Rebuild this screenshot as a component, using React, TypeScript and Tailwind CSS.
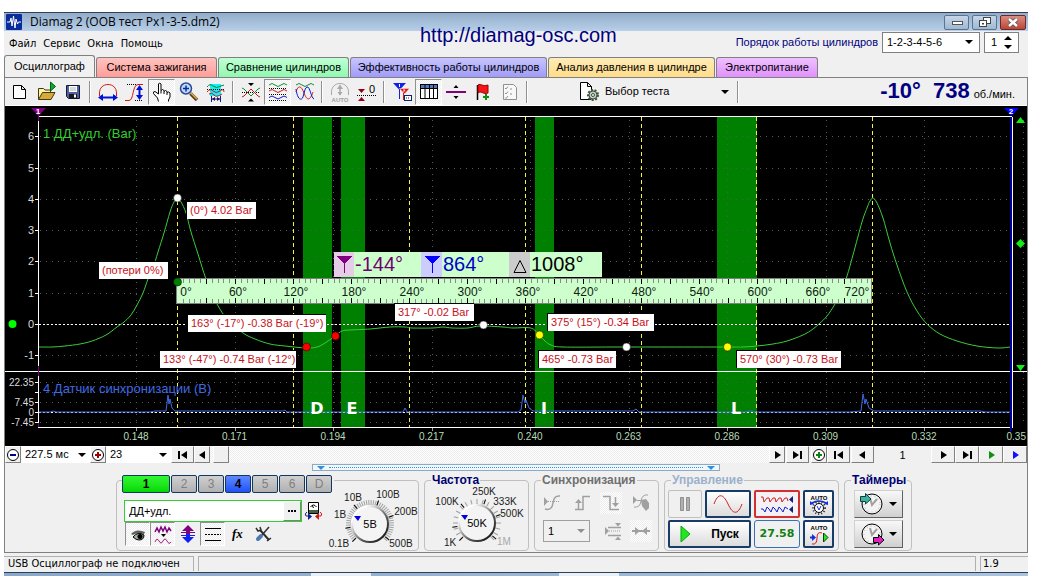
import React from 'react';
import clsx from 'clsx';

type Point = [number, number];

const raised = 'border border-t-white border-l-white border-r-[#808080] border-b-[#808080] bg-[#f0f0f0]';
const hatch = 'bg-[repeating-conic-gradient(#ffffff_0_25%,#ececec_0_50%)] bg-[length:2px_2px]';

function Svg({ w = 24, h = 24, children }: { w?: number; h?: number; children: React.ReactNode }) {
  return (
    <svg width={w} height={h} viewBox={`0 0 ${w} ${h}`} fill="none" className="shrink-0" aria-hidden="true">
      {children}
    </svg>
  );
}

function DownArrow({ color = 'black' }: { color?: string }) {
  return (
    <svg width="8" height="4" viewBox="0 0 8 4" aria-hidden="true">
      <path d="M0 0H8L4 4Z" fill={color} />
    </svg>
  );
}

function Combo({ label, value, className, arrow = 'right-1.5', disabled }: {
  label: string;
  value: string;
  className?: string;
  arrow?: string;
  disabled?: boolean;
}) {
  return (
    <div className={clsx('relative shrink-0', className)}>
      <select aria-label={label} disabled={disabled} className="block h-full w-full appearance-none pl-1 text-black opacity-100 outline-none">
        <option>{value}</option>
      </select>
      <span className={clsx('pointer-events-none absolute inset-y-0 flex items-center', arrow)}>
        <DownArrow color={disabled ? '#909090' : 'black'} />
      </span>
    </div>
  );
}

/* ---------- title bar and menu ---------- */

function TitleBar() {
  return (
    <header className="flex h-[19px] items-center border-t border-[#30405a] bg-gradient-to-b from-[#93adca] to-[#b7cfe8] pr-0.5 pl-0.5">
      <Svg w={16} h={16}>
        <rect width="16" height="16" rx="1" fill="#0b2c9c" />
        <path d="M1 8H4L5 4L6 12L7.500 2L9 14L10 5L11.500 10L12.500 8H15" stroke="white" />
      </Svg>
      <h1 className="grow pl-2 font-['Open_Sans','Noto_Sans',sans-serif] text-[12px] leading-4 text-black">
        Diamag 2 (ООВ тест Рх1-3-5.dm2)
      </h1>
      <div className="flex gap-[3px]">
        <button aria-label="Свернуть" className="flex h-[15px] w-[25px] items-center justify-center rounded-xs border border-[#5b7390] bg-gradient-to-b from-[#c5d6e8] to-[#9fb8d2]">
          <Svg w={12} h={10}><rect x="1.500" y="4.500" width="10" height="3" fill="white" stroke="#555" /></Svg>
        </button>
        <button aria-label="Восстановить" className="flex h-[15px] w-[25px] items-center justify-center rounded-xs border border-[#5b7390] bg-gradient-to-b from-[#c5d6e8] to-[#9fb8d2]">
          <Svg w={14} h={11}>
            <rect x="5.500" y="0.500" width="7" height="6" fill="white" stroke="#444" />
            <rect x="1.500" y="3.500" width="7" height="6" fill="white" stroke="#444" />
            <rect x="4" y="6" width="2" height="1.500" fill="#444" />
          </Svg>
        </button>
        <button aria-label="Закрыть" className="flex h-[15px] w-[26px] items-center justify-center rounded-xs border border-[#6b2a26] bg-gradient-to-b from-[#d98c80] to-[#bc4434]">
          <Svg w={12} h={9}>
            <path d="M2 1L10 8M10 1L2 8" stroke="#555" strokeWidth="4" />
            <path d="M2 1L10 8M10 1L2 8" stroke="white" strokeWidth="2.500" />
          </Svg>
        </button>
      </div>
    </header>
  );
}

function MenuBar() {
  return (
    <div className="flex h-[26px] items-center justify-between pr-[9px] pl-[5px]">
      <nav className="flex gap-[7px] font-['DejaVu_Sans_Condensed','DejaVu_Sans',sans-serif] text-[11px] leading-4">
        <button>Файл</button>
        <button>Сервис</button>
        <button>Окна</button>
        <button>Помощь</button>
      </nav>
      <div className="flex items-center gap-1 pb-1">
        <span className="text-[#000080]">Порядок работы цилиндров</span>
        <Combo label="Порядок работы цилиндров" value="1-2-3-4-5-6" className="h-[21px] w-[98px] border border-[#808080] bg-white" />
        <div className="flex h-[21px] w-[35px] items-center justify-between border border-[#808080] bg-white pr-1.5 pl-1.5">
          <input aria-label="Номер" defaultValue="1" className="w-3 outline-none" />
          <div className="flex flex-col gap-[5px]">
            <button aria-label="Больше"><svg width="8" height="4" className="block"><path d="M0 4H8L4 0Z" /></svg></button>
            <button aria-label="Меньше"><svg width="8" height="4" className="block"><path d="M0 0H8L4 4Z" /></svg></button>
          </div>
        </div>
      </div>
    </div>
  );
}

const tabs = [
  { name: 'Осциллограф', look: 'w-[91px] bg-[#f0f0f0] h-[22px]' },
  { name: 'Система зажигания', look: 'w-[121px] bg-gradient-to-b from-[#ffc4c0] to-[#ff9c98] h-5' },
  { name: 'Сравнение цилиндров', look: 'w-[131px] bg-gradient-to-b from-[#c0ffd4] to-[#90f8b0] h-5' },
  { name: 'Эффективность работы цилиндров', look: 'w-[197px] bg-gradient-to-b from-[#c8c4ff] to-[#a09cf8] h-5' },
  { name: 'Анализ давления в цилиндре', look: 'w-[167px] bg-gradient-to-b from-[#ffecb8] to-[#ffdc88] h-5' },
  { name: 'Электропитание', look: 'w-[102px] bg-gradient-to-b from-[#f0c0ff] to-[#e090fc] h-5' },
];

function Tabs() {
  return (
    <div role="tablist" className="-mt-0.5 flex h-[22px] items-end gap-px">
      {tabs.map((tab, i) => (
        <button
          key={tab.name}
          role="tab"
          aria-selected={i === 0}
          className={clsx('shrink-0 rounded-t-[3px] border border-b-0 border-[#808080] text-center whitespace-nowrap', tab.look)}
        >
          {tab.name}
        </button>
      ))}
    </div>
  );
}

/* ---------- toolbar ---------- */

const dots = { stroke: 'black', strokeDasharray: '1 1' };

const icons = {
  create: <path d="M6.500 5.500H14.500L18.500 9.500V18.500H6.500ZM14.500 5.500V9.500H18.500" fill="white" stroke="black" />,
  open: (
    <>
      <path d="M4.500 19.500V8.500H9.500L11 10H16.500V13" fill="#fff0a8" stroke="#3c3c10" />
      <path d="M4.500 19.500L8.500 12.500H21L17 19.500Z" fill="#d8a838" stroke="#3c3c10" />
      <path d="M16.500 2V11L21.500 6.500Z" fill="#00b030" stroke="#006010" />
    </>
  ),
  save: (
    <>
      <path d="M5.500 5.500H18.500V18.500H7.500L5.500 16.500Z" fill="#5060a0" stroke="#101838" />
      <rect x="8" y="6" width="8" height="6" fill="white" />
      <path d="M9 8H15M9 10H15" stroke="#b0b0b0" />
      <rect x="8" y="14" width="8" height="4" fill="#181818" />
      <rect x="13" y="14.500" width="2" height="3" fill="white" />
    </>
  ),
  arch: (
    <>
      <path d="M3.500 16V13C3.500 8 7 4.500 12 4.500S20.500 8 20.500 13V16" stroke="#d01818" />
      <path d="M4 17.500H20" stroke="#0010d8" strokeWidth="2" />
      <path d="M2 17.500L7 14V21ZM22 17.500L17 14V21Z" fill="#0010d8" />
    </>
  ),
  edge: (
    <>
      <path d="M4 4.500H13M12 20.500H20" {...dots} />
      <path d="M2 20.500H6C11 20.500 9 5 15 4.500H20" stroke="#d01818" />
      <path d="M16.500 7V18" stroke="#0010d8" strokeWidth="2" />
      <path d="M16.500 5L13 10H20ZM16.500 20L13 15H20Z" fill="#0010d8" />
    </>
  ),
  hand: (
    <path
      d="M8.500 21.500L7.500 18L3.500 13.500V12L5 11.500L8.500 14V4L9.500 3L11 4V10.500L12.500 9.500L14 10.500V11.500L15.500 10.500L17 11.500V12.500L18.500 12L20 13V17L18.500 20V21.500M11 10.500V13.500M14 11.500V14M17 12.500V15"
      fill="white"
      stroke="black"
    />
  ),
  zoom: (
    <>
      <path d="M13.500 13.500L20 20" stroke="#604010" strokeWidth="3.500" />
      <path d="M14 13L20 19" stroke="#e0a860" strokeWidth="1.500" />
      <circle cx="9" cy="8.500" r="5.500" fill="#b8dcff" stroke="#304890" strokeWidth="1.500" />
      <path d="M6 8.500H12M9 5.500V11.500" stroke="#102890" strokeWidth="1.500" />
    </>
  ),
  select: (
    <>
      <rect x="6" y="4" width="11" height="12" fill="#10f0f8" />
      <path d="M3 7Q6 3 9 6T17 6L20 5" stroke="#108030" />
      <path d="M3 9.500H20" {...dots} />
      <path d="M3 12Q6 8 9 11T16 11T20 12M5 14Q8 12 10 15T18 14" stroke="#d01818" />
      <path d="M8 19H16M7.500 16V22M16.500 16V22" stroke="#102070" />
      <path d="M8 19L11 17V21ZM16 19L13 17V21Z" fill="#102070" />
    </>
  ),
  squeeze: (
    <>
      <path d="M3 12.500H21" {...dots} />
      <path d="M3 8L5 9L12 16L19 9L21 8" stroke="#109030" />
      <path d="M3 17L5 16L12 9L19 16L21 17" stroke="#d01818" />
      <path d="M9 3H15L12 6ZM9 21.500H15L12 18.500Z" fill="black" />
    </>
  ),
  waves: (
    <>
      <path d="M3 8.500H21M3 14.500H21M3 20.500H21" {...dots} />
      <path d="M3 5Q6 2 9 5T15 5T21 5" stroke="#109030" />
      <path d="M3 11Q6 8 9 11T15 11T21 11" stroke="#d01818" />
      <path d="M3 17.500Q6 14.500 9 17.500T15 17.500T21 17.500" stroke="#1018c8" />
    </>
  ),
  overlay: (
    <>
      <path d="M3 5Q6 2 9 5T15 5T21 5" stroke="#109030" />
      <path d="M3 12C5 5 8 5 11 13S17 21 20 12" stroke="#d01818" />
      <path d="M3 9C4 16 6 20 8.500 19S11 8 14 7S18 18 21 19" stroke="#1018c8" />
    </>
  ),
  auto: (
    <>
      <path d="M3.500 15V12C3.500 7 7 3.500 12 3.500S20.500 7 20.500 12V15" stroke="#a8a8a8" />
      <path d="M12 6V15" stroke="#a8a8a8" strokeWidth="1.500" />
      <path d="M12 4.500L9 9H15ZM12 15.500L9.500 12H14.500Z" fill="#a8a8a8" />
      <text x="12" y="22" textAnchor="middle" fontSize="6" fontWeight="bold" fill="#a0a0a0">AUTO</text>
    </>
  ),
  zero: (
    <>
      <path d="M2 15.500H21" {...dots} />
      <path d="M3 9H10L6.500 13ZM3 21H10L6.500 17Z" fill="#900010" />
      <text x="14" y="13" fontSize="11" fill="black">0</text>
    </>
  ),
  markers: (
    <>
      <path d="M3 3H16L9.500 10Z" fill="#1020e8" />
      <path d="M9.500 8V19" stroke="#1020e8" />
      <path d="M9.500 4V7" stroke="white" />
      <path d="M9.500 8.500H19.500L14.500 14Z" fill="#e01818" stroke="#f0f0f0" strokeWidth="0.500" />
      <path d="M13.500 13V20" stroke="#e01818" />
      <path d="M13 10H15L13.500 12" stroke="white" strokeWidth="0.800" />
      <rect x="14.500" y="15.500" width="7" height="5" fill="white" stroke="#102070" />
      <path d="M16 18H20" stroke="#102070" strokeDasharray="1 1" />
    </>
  ),
  table: (
    <>
      <rect x="3.500" y="4.500" width="17" height="14" fill="white" stroke="black" />
      <rect x="4" y="5" width="16" height="3" fill="#5078c0" />
      <path d="M3 8.500H21M8 5V18M12.500 5V18M16.500 5V18" stroke="black" />
    </>
  ),
  split: (
    <>
      <path d="M2 12H22" stroke="#800080" strokeWidth="2" />
      <path d="M9.500 8H14.500L12 5ZM9.500 16H14.500L12 19Z" fill="black" />
    </>
  ),
  flag: (
    <>
      <path d="M6.500 5V20" stroke="black" strokeWidth="1.500" />
      <path d="M7 5C10 3 11 7 17 5V13C12 15 10 10 7 13Z" fill="#f01818" stroke="#900" />
      <path d="M15 14V20M12 17H18" stroke="#109010" strokeWidth="2" />
    </>
  ),
  checklist: (
    <>
      <path d="M5.500 4.500H15.500L18.500 7.500V19.500H5.500Z" fill="#f8f8f8" stroke="#909090" />
      <path d="M7 8L8 9L10 6.500M7 13L8 14L10 11.500M7 17.500L8 18.500L10 16M12 9H14M12 14H14" stroke="#909090" />
    </>
  ),
};

type Tool = { icon: keyof typeof icons; label: string; pressed?: boolean };

const toolGroups: Tool[][] = [
  [{ icon: 'create', label: 'Новый' }, { icon: 'open', label: 'Открыть' }, { icon: 'save', label: 'Сохранить' }],
  [
    { icon: 'arch', label: 'По горизонтали' },
    { icon: 'edge', label: 'По вертикали' },
    { icon: 'hand', label: 'Рука', pressed: true },
    { icon: 'zoom', label: 'Увеличить' },
    { icon: 'select', label: 'Фрагмент' },
  ],
  [
    { icon: 'squeeze', label: 'Сжать' },
    { icon: 'waves', label: 'Раздельно', pressed: true },
    { icon: 'overlay', label: 'Наложить' },
  ],
  [{ icon: 'auto', label: 'Авто' }, { icon: 'zero', label: 'Ноль' }],
  [
    { icon: 'markers', label: 'Маркеры' },
    { icon: 'table', label: 'Таблица', pressed: true },
    { icon: 'split', label: 'Разделить' },
    { icon: 'flag', label: 'Метка' },
    { icon: 'checklist', label: 'Отчёт' },
  ],
];

function Toolbar() {
  return (
    <div className="flex h-[29px] items-center border-t border-b border-t-[#808080] border-b-white">
      {toolGroups.map((group, i) => (
        <div key={i} className="flex items-center">
          {group.map((tool) => (
            <button
              key={tool.icon}
              aria-label={tool.label}
              className={clsx(
                'flex h-[26px] w-[27px] items-center justify-center',
                tool.pressed && ['border border-t-[#909090] border-r-white border-b-white border-l-[#909090]', hatch],
              )}
            >
              <Svg>{icons[tool.icon]}</Svg>
            </button>
          ))}
          <div className="mx-[3px] h-[22px] w-0.5 border-l border-[#909090] bg-white" />
        </div>
      ))}
      <button className="ml-12 flex w-[150px] items-center">
        <Svg w={22} h={22}>
          <path d="M1.500 1.500H8.500L12.500 5.500V18.500H1.500ZM8.500 1.500V5.500H12.500" fill="white" stroke="black" />
          <circle cx="14" cy="14" r="5" fill="#c0d0c0" stroke="#405040" strokeWidth="2" strokeDasharray="2 1.500" />
          <circle cx="14" cy="14" r="4" fill="#c0d0c0" stroke="#405040" />
          <circle cx="14" cy="14" r="1.500" fill="white" stroke="#405040" />
        </Svg>
        <span className="grow pl-1 text-left">Выбор теста</span>
        <DownArrow />
      </button>
      <div className="ml-2 h-[22px] w-0.5 border-l border-[#909090] bg-white" />
      <div className="flex grow items-baseline justify-end pt-0.5 pr-3 leading-6 text-[#000080]">
        <span className="text-[22px] font-bold">-10°</span>
        <span className="ml-3 text-[22px] font-bold">738</span>
        <span className="ml-1 text-[11px] text-black">об./мин.</span>
      </div>
    </div>
  );
}

/* ---------- oscillogram ---------- */

const pressure: Point[] = [
  [39, 347], [52, 347], [65, 346], [80, 344], [92, 341], [106, 335], [117, 327], [124, 322], [131, 315], [137, 305],
  [143, 293], [148, 279], [153, 268], [158, 252], [164, 233], [170, 212], [174, 202], [177, 198], [181, 202],
  [186, 213], [191, 232], [198, 254], [206, 279], [217, 304], [228, 320], [243, 333], [255, 339], [270, 344],
  [285, 346], [306, 348], [317, 347], [325, 343], [335, 336], [342, 331], [350, 330], [370, 329], [390, 327],
  [405, 327], [412, 328], [433, 328], [443, 327], [452, 328], [468, 328], [480, 326], [503, 327], [513, 328],
  [531, 328], [539, 335], [545, 341], [551, 345], [563, 347], [620, 347], [727, 347], [742, 347], [757, 346],
  [773, 344], [787, 341], [803, 335], [813, 329], [820, 323], [827, 316], [835, 304], [841, 292], [847, 276],
  [853, 255], [862, 222], [867, 208], [870, 201], [873, 198], [877, 203], [883, 218], [890, 243], [897, 265],
  [907, 292], [917, 311], [927, 324], [940, 334], [957, 341], [977, 346], [998, 348], [1010, 347],
];

const sync =
  'M39 412H50L53 411L56 412H150L155 411H166L168 395L169 404L170 399L172 408L175 411L200 411H283L285 410L287 412H403L405 408L407 412H518L521 410L523 395L525 403L526 400L529 408L533 411L560 411H633L636 409L639 412H745L750 411L755 412H850L861 411L863 394L865 404L866 399L869 408L874 411L910 411H975L980 411L985 412H1010';

const bands = [
  { name: 'D', x: 303, w: 29, tx: 317 },
  { name: 'E', x: 341, w: 24, tx: 352 },
  { name: 'I', x: 535, w: 19, tx: 544 },
  { name: 'L', x: 717, w: 40, tx: 736 },
];

const strokeMarks = [177, 293, 409, 525, 641, 756, 872];

const timeAxis = ['0.148', '0.171', '0.194', '0.217', '0.240', '0.263', '0.286', '0.309', '0.332'];

const barAxis = [6, 5, 4, 3, 2, 1, 0, -1];

const syncAxis: [string, number][] = [['22.35', 382], ['', 392], ['7.45', 402], ['0', 412], ['-7.45', 422]];

const notes = [
  { text: '(0°) 4.02 Bar', x: 187, y: 202, w: 69 },
  { text: '(потери 0%)', x: 99, y: 262, w: 69 },
  { text: '163° (-17°) -0.38 Bar (-19°)', x: 188, y: 315, w: 138 },
  { text: '133° (-47°) -0.74 Bar (-12°)', x: 160, y: 351, w: 136 },
  { text: '317° -0.02 Bar', x: 395, y: 304, w: 79 },
  { text: '375° (15°) -0.34 Bar', x: 548, y: 314, w: 106 },
  { text: '465° -0.73 Bar', x: 539, y: 351, w: 77 },
  { text: '570° (30°) -0.73 Bar', x: 737, y: 351, w: 104 },
];

const points = [
  { x: 177, y: 198, fill: 'white' },
  { x: 177, y: 282, fill: '#008000' },
  { x: 306, y: 347, fill: '#ff0000' },
  { x: 335, y: 336, fill: '#ff0000' },
  { x: 483, y: 325, fill: 'white' },
  { x: 539, y: 335, fill: '#ffff00' },
  { x: 626, y: 347, fill: 'white' },
  { x: 727, y: 347, fill: '#ffff00' },
];

// Catmull-Rom spline through the sampled points
function smooth(pts: Point[]) {
  return pts.slice(1).reduce((d, p, i) => {
    const a = pts[Math.max(i - 1, 0)];
    const b = pts[i];
    const c = pts[Math.min(i + 2, pts.length - 1)];
    return `${d}C${b[0] + (p[0] - a[0]) / 6} ${b[1] + (p[1] - a[1]) / 6} ${p[0] - (c[0] - b[0]) / 6} ${p[1] - (c[1] - b[1]) / 6} ${p[0]} ${p[1]}`;
  }, `M${pts[0][0]} ${pts[0][1]}`);
}

function Ruler() {
  return (
    <g>
      <rect x="176.500" y="278.500" width="695" height="25" fill="#ccffcc" stroke="#808080" />
      {Array.from({ length: 119 }, (_, i) => i + 1).map((i) => {
        const x = Math.round(177 + i * 5.8) + 0.5;
        const major = i % 5 === 0;
        const len = major ? 5 : 4;
        return <path key={i} d={`M${x} 279v${len}M${x} 303v-${len}`} stroke={major ? 'black' : '#809080'} />;
      })}
      <g fontSize="12" fill="#102010" textAnchor="middle">
        <text x="186" y="296">0°</text>
        {Array.from({ length: 11 }, (_, i) => (
          <text key={i} x={238 + i * 58} y="296">{(i + 1) * 60}°</text>
        ))}
        <text x="857" y="296">720°</text>
      </g>
    </g>
  );
}

function Readout() {
  return (
    <g fontSize="20" shapeRendering="crispEdges">
      <rect x="334" y="252" width="268" height="25" fill="#ccffcc" />
      <rect x="334" y="252" width="20" height="25" fill="#e6cce6" />
      <path d="M337 256H352L344.500 264Z" fill="#800080" />
      <path d="M344.500 262V273" stroke="#800080" />
      <text x="355" y="271" fill="#700070">-144°</text>
      <rect x="421" y="252" width="21" height="25" fill="#ccccff" />
      <path d="M425 256H440L432.500 264Z" fill="#0000ff" />
      <path d="M432.500 262V273" stroke="#0000ff" />
      <text x="443" y="271" fill="#0000c8">864°</text>
      <rect x="509" y="252" width="21" height="25" fill="#cccccc" />
      <path d="M514 272.500H526L520 260.500Z" fill="none" stroke="black" shapeRendering="auto" />
      <text x="531" y="271" fill="black">1008°</text>
    </g>
  );
}

function Oscillogram() {
  return (
    <svg viewBox="5 106 1022 340" className="block w-full bg-black" role="img" aria-label="Осциллограмма">
      <g shapeRendering="crispEdges">
        {bands.map((b) => (
          <rect key={b.name} x={b.x} y="117" width={b.w} height="310" fill="#008000" />
        ))}
        <g stroke="#585858" strokeDasharray="1 5">
          {barAxis.map((v) => <path key={v} d={`M40 ${Math.round(324 - v * 31.300) + 0.5}H1010`} />)}
          {syncAxis.map(([, y]) => <path key={y} d={`M40 ${y + 0.5}H1010`} />)}
          {[...timeAxis, ''].map((t, i) => <path key={t} d={`M${Math.round(136 + i * 98.500) + 0.5} 120V424`} />)}
        </g>
        <g stroke="#f4f440" strokeDasharray="4 3">
          {strokeMarks.map((x) => <path key={x} d={`M${x + 0.5} 117V427`} />)}
        </g>
        <path d="M39 324.500H1010M39 412.500H1010" stroke="white" strokeDasharray="2 2" />
        <path d="M38.500 117V427M38 116.500H1012M5 371.500H1027M38 427.500H1013M1012.500 117V427" stroke="white" />
        <path d="M1010.500 117V431" stroke="#0000a0" strokeWidth="2" />
        <path d="M38.500 115V121M38.500 366V376M38.500 423V427" stroke="#800080" />
        {barAxis.map((v) => <path key={v} d={`M35 ${Math.round(324 - v * 31.300) + 0.5}h3`} stroke="white" />)}
        {syncAxis.map(([, y]) => <path key={y} d={`M35 ${y + 0.5}h3`} stroke="white" />)}
        {timeAxis.map((t, i) => <path key={t} d={`M${Math.round(136 + i * 98.500) + 0.5} 428v3`} stroke="#a0a0a0" />)}
      </g>

      <g fontSize="11" fill="#dcdcdc" textAnchor="end">
        {barAxis.map((v) => <text key={v} x="34" y={328 - v * 31.300}>{v}</text>)}
      </g>
      <g fontSize="10" fill="#dcdcdc" textAnchor="end">
        {syncAxis.map(([t, y]) => <text key={y} x="34" y={y + 4}>{t}</text>)}
      </g>
      <g fontSize="10" fill="#b8dcb8" textAnchor="middle">
        {timeAxis.map((t, i) => <text key={t} x={136 + i * 98.500} y="440">{t}</text>)}
        <text x="1026" y="440" textAnchor="end">0.35</text>
      </g>
      <text x="43" y="138" fontSize="13" fill="#32cd32">1 ДД+удл. (Bar)</text>
      <text x="43" y="393" fontSize="13" fill="#4169e1">4 Датчик синхронизации (В)</text>

      <path d={smooth(pressure)} fill="none" stroke="#3ccc3c" />
      <path d={sync} fill="none" stroke="#4169e1" />
      <g fontSize="16" fontWeight="bold" fill="white" textAnchor="middle" className="font-['DejaVu_Sans',sans-serif]">
        {bands.map((b) => <text key={b.name} x={b.tx} y="414">{b.name}</text>)}
      </g>

      <Ruler />
      <Readout />
      {notes.map((n) => (
        <g key={n.text}>
          <rect x={n.x - 1} y={n.y - 1} width={n.w + 1} height="18" fill="black" />
          <rect x={n.x} y={n.y} width={n.w} height="17" fill="white" />
          <text x={n.x + 3} y={n.y + 12} fontSize="11" fill="#c81020">{n.text}</text>
        </g>
      ))}
      {points.map((p) => <circle key={`${p.x}-${p.y}`} cx={p.x + 0.5} cy={p.y} r="4" fill={p.fill} stroke="black" strokeWidth="0.500" />)}

      <circle cx="12.500" cy="324" r="4" fill="#00ff00" />
      <path d="M1016 123H1025L1020.500 117ZM1020.500 239L1025 243.500L1020.500 248L1016 243.500ZM1016 365H1025L1020.500 371Z" fill="#10f010" />
      <path d="M31 108H46L38.500 116Z" fill="#800080" />
      <path d="M1004 108H1019L1011.500 116Z" fill="#0000ff" />
      <g fontSize="8" fontWeight="bold" fill="white" textAnchor="middle">
        <text x="38" y="114">1</text>
        <text x="1011" y="114">2</text>
      </g>
    </svg>
  );
}

/* ---------- scroll row ---------- */

type Glyph = 'first' | 'prev' | 'next' | 'last';

const glyphs: Record<Glyph, string> = {
  first: 'M2 1H4V9H2ZM11 1V9L5 5Z',
  prev: 'M9 1V9L3 5Z',
  next: 'M4 1V9L10 5Z',
  last: 'M2 1V9L8 5ZM9 1H11V9H9Z',
};

function NavButton({ glyph, label, className, color = 'black' }: { glyph: Glyph; label: string; className?: string; color?: string }) {
  return (
    <button aria-label={label} className={clsx('flex h-[17px] shrink-0 items-center justify-center', raised, className)}>
      <svg width="13" height="10" viewBox="0 0 13 10"><path d={glyphs[glyph]} fill={color} /></svg>
    </button>
  );
}

function RoundButton({ label, color, minus }: { label: string; color: string; minus?: boolean }) {
  return (
    <button aria-label={label} className={clsx('flex h-[17px] w-4 shrink-0 items-center justify-center', raised)}>
      <Svg w={14} h={14}>
        <circle cx="7" cy="7" r="5.500" fill="white" stroke="black" />
        <path d={minus ? 'M4 7H10' : 'M4 7H10M7 4V10'} stroke={color} strokeWidth="2" />
      </Svg>
    </button>
  );
}

function ScrollRow() {
  return (
    <div className="flex h-[18px] items-start">
      <RoundButton label="Сжать" color="#000090" minus />
      <Combo label="Длительность" value="227.5 мс" arrow="right-1" className="h-[17px] w-[69px] bg-white" />
      <RoundButton label="Растянуть" color="#a00000" />
      <Combo label="Кадр" value="23" arrow="right-1" className="h-[17px] w-[65px] bg-white" />
      <NavButton glyph="first" label="В начало" className="w-[23px]" />
      <NavButton glyph="prev" label="Влево" className="w-4" />
      <div className={clsx('flex h-[17px] grow pl-[3px]', hatch)}>
        <button aria-label="Ползунок" className={clsx('h-full w-4', raised)} />
      </div>
      <NavButton glyph="next" label="Вправо" className="w-4" />
      <NavButton glyph="last" label="В конец" className="mr-0.5 ml-px w-[23px]" />
      <RoundButton label="Добавить кадр" color="#108010" />
      <NavButton glyph="first" label="Первый кадр" className="w-[23px]" />
      <NavButton glyph="prev" label="Предыдущий кадр" className="ml-px w-[23px]" />
      <span className="w-[57px] text-center leading-[18px]">1</span>
      <NavButton glyph="next" label="Следующий кадр" className="w-6" />
      <NavButton glyph="last" label="Последний кадр" className="w-6" />
      <NavButton glyph="next" label="Воспроизвести" color="#109010" className="w-6" />
      <NavButton glyph="next" label="Воспроизвести всё" color="#1010ff" className="w-6" />
    </div>
  );
}

/* ---------- control panel ---------- */

type KnobLabel = { t: string; x: number; y: number; off?: boolean };

function Knob({ value, labels, step, id }: { value: string; labels: KnobLabel[]; step: number; id: string }) {
  const ticks: number[] = [];
  for (let a = -225; a <= 45; a += step) ticks.push(a);
  return (
    <svg width="96" height="66" viewBox="-48 -39 96 66" role="img" aria-label={value}>
      <defs>
        <linearGradient id={id} x1="0" y1="0" x2="1" y2="1">
          <stop offset="0.200" stopColor="white" />
          <stop offset="0.600" stopColor="#606060" />
          <stop offset="1" stopColor="black" />
        </linearGradient>
      </defs>
      {ticks.map((a) => (
        <path key={a} d="M19 0H24" stroke="#a0a0a0" transform={`rotate(${a})`} />
      ))}
      {[-225, -190, -130, -70, -20, 40].map((a) => (
        <path key={a} d="M20 0H25" stroke="black" transform={`rotate(${a})`} />
      ))}
      <circle r="18" fill="#f4f4f4" stroke={`url(#${id})`} strokeWidth="2" />
      <path d="M-16-8H-9L-12-3Z" fill="#0000e0" />
      <text y="4" fontSize="11" textAnchor="middle">{value}</text>
      <g fontSize="10" textAnchor="middle" fill="#202020">
        {labels.map((l) => (
          <text key={l.t} x={l.x} y={l.y} fill={l.off ? '#a8a8a8' : undefined}>{l.t}</text>
        ))}
      </g>
    </svg>
  );
}

const channels = [
  { name: '1', look: 'w-12 bg-gradient-to-b from-[#30f830] to-[#00d800] font-bold text-black' },
  { name: '2', look: 'w-[26px] bg-gradient-to-b from-[#d0d0d0] to-[#b0b0b0] text-[#808080]' },
  { name: '3', look: 'w-[26px] bg-gradient-to-b from-[#d0d0d0] to-[#b0b0b0] text-[#808080]' },
  { name: '4', look: 'w-[26px] bg-gradient-to-b from-[#6088ff] to-[#2050f8] font-bold text-black' },
  { name: '5', look: 'w-[26px] bg-gradient-to-b from-[#d0d0d0] to-[#b0b0b0] text-[#808080]' },
  { name: '6', look: 'w-[26px] bg-gradient-to-b from-[#d0d0d0] to-[#b0b0b0] text-[#808080]' },
  { name: 'D', look: 'w-[26px] bg-gradient-to-b from-[#d0d0d0] to-[#b0b0b0] text-[#808080]' },
];

const channelTools = [
  {
    label: 'Показать',
    pressed: true,
    icon: (
      <>
        <path d="M3 10Q8 4 17 8L16 10Q9 8 5 11Z" fill="#606060" />
        <path d="M5 13Q10 7 16 11Q16 16 11 16Q8 16 5 13Z" fill="#a0b0a0" stroke="black" />
        <circle cx="12" cy="12.500" r="2.500" fill="black" />
      </>
    ),
  },
  {
    label: 'Фильтр',
    pressed: true,
    icon: (
      <>
        <path d="M2 8L4 4L6 8L8 3L10 7L12 3L14 8L16 4L18 7" stroke="#800080" strokeWidth="1.500" />
        <path d="M8 10H13L10.500 13Z" fill="black" />
        <path d="M2 18Q4 13 6 17T10 17T14 17T18 18" stroke="#a02080" />
      </>
    ),
  },
  {
    label: 'Смещение',
    icon: (
      <>
        <path d="M10 1L16 7H12V10H8V7H4Z" fill="#800080" />
        <path d="M10 19L16 13H12V10H8V13H4Z" fill="#1020f0" />
        <path d="M3 8.500H17" stroke="#800080" />
        <path d="M3 11.500H17" stroke="#1020f0" />
      </>
    ),
  },
  { label: 'Линии', pressed: true, icon: <path d="M2 4.500H18M2 16.500H18M2 10.500H4M5 10.500H7M8 10.500H10M11 10.500H13M14 10.500H16M17 10.500H18" stroke="black" /> },
  { label: 'Формула', icon: <text x="4" y="14" fontSize="13" fontWeight="bold" fontStyle="italic" fill="black" className="font-['Liberation_Serif',serif]">fx</text> },
  {
    label: 'Настройки',
    icon: (
      <>
        <path d="M7 6L16 16" stroke="#303030" strokeWidth="2" />
        <path d="M3 4L5 7L8 6L7 3" stroke="#303030" strokeWidth="1.500" />
        <path d="M16 3L9 11" stroke="#303030" strokeWidth="1.500" />
        <path d="M8 12L5 15" stroke="#5078b0" strokeWidth="4" strokeLinecap="round" />
        <path d="M14 17L18 14" stroke="#303030" strokeWidth="1.500" />
      </>
    ),
  },
];

function ChannelGroup() {
  return (
    <section className="mt-1.5 flex h-[71px] w-[303px] rounded-[4px] border border-[#c0c0c0] pl-[5px]">
      <div className="w-[212px] shrink-0">
        <div className="-mt-1.5 flex gap-px bg-[#f0f0f0]">
          {channels.map((c) => (
            <button key={c.name} className={clsx('h-[18px] shrink-0 rounded-xs border border-[#103860] text-center text-[12px] leading-4', c.look)}>
              {c.name}
            </button>
          ))}
        </div>
        <div className="mt-[7px] flex items-center pl-0.5">
          <div className="flex h-[22px] w-[178px] border border-[#30d030] bg-white">
            <input aria-label="Датчик" defaultValue="ДД+удл." className="w-full min-w-0 pl-1 outline-none" />
            <button aria-label="Выбрать датчик" className={clsx('flex w-[18px] shrink-0 items-center justify-center', raised)}>
              <Svg w={10} h={4}><path d="M1 1H3V3H1ZM4 1H6V3H4ZM7 1H9V3H7Z" fill="black" /></Svg>
            </button>
          </div>
          <button aria-label="Инвертировать" className="ml-0.5">
            <Svg w={20} h={20}>
              <path d="M4.500 1.500H14.500V12.500H4.500Z" fill="white" stroke="black" />
              <rect x="5" y="9" width="9" height="3" fill="#406040" />
              <path d="M6.500 6Q9.500 2 12.500 6M9.500 7L8 4" stroke="black" />
              <path d="M3 11Q0 13 2 15H5" stroke="#102090" />
              <path d="M4 12L8 15.500L4 19Z" fill="#102090" />
              <path d="M16 11Q19 13 17 15H14" stroke="#d01818" />
              <path d="M15 12L11 15.500L15 19Z" fill="#d01818" />
            </Svg>
          </button>
        </div>
        <div className="flex pl-[3px]">
          {channelTools.map((t) => (
            <button
              key={t.label}
              aria-label={t.label}
              className={clsx('flex h-6 w-[25px] items-center justify-center', t.pressed && ['border border-t-[#909090] border-r-white border-b-white border-l-[#909090]', hatch])}
            >
              <Svg w={20} h={20}>{t.icon}</Svg>
            </button>
          ))}
        </div>
      </div>
      <div className="-ml-3 pt-1">
        <Knob
          id="volts"
          value="5В"
          step={6}
          labels={[
            { t: '0.1В', x: -31, y: 23 },
            { t: '1В', x: -30, y: -6 },
            { t: '10В', x: -17, y: -23 },
            { t: '100В', x: 18, y: -26 },
            { t: '200В', x: 36, y: -9 },
            { t: '500В', x: 31, y: 23 },
          ]}
        />
      </div>
    </section>
  );
}

function Group({ title, tone, className, children }: { title: string; tone: string; className: string; children: React.ReactNode }) {
  return (
    <fieldset className={clsx('h-[77px] shrink-0 rounded-[4px] border border-[#c0c0c0]', className)}>
      <legend className={clsx('ml-1.5 px-px text-[12px] leading-3 font-bold', tone)}>{title}</legend>
      {children}
    </fieldset>
  );
}

const gray = '#a0a0a0';

const syncTools = [
  { label: 'Авто', icon: <><path d="M2 4V13L6 8.500Z" fill={gray} /><path d="M6 8.500H18" stroke={gray} strokeDasharray="1 1" /><path d="M3 16Q10 18 11 10T18 3" stroke={gray} strokeWidth="1.500" /></> },
  { label: 'Фронт', icon: <><path d="M3 16.500H11V3.500H18" stroke={gray} strokeWidth="1.500" /><path d="M6.500 16V9" stroke={gray} strokeWidth="1.500" /><path d="M3 10H10L6.500 6Z" fill={gray} /></> },
  { label: 'Спад', pressed: true, icon: <><path d="M2 3.500H9V16.500H18" stroke={gray} strokeWidth="1.500" /><path d="M14.500 4V12" stroke={gray} strokeWidth="1.500" /><path d="M11 10H18L14.500 14Z" fill={gray} /></> },
  { label: 'Вручную', icon: <><path d="M2 3V11L6 7Z" fill={gray} /><path d="M6 7.500H14M3 14Q9 15 10 8T17 2" stroke={gray} /><path d="M10 7L15 6L18 10V15L15 18L11 13Z" fill={gray} /></> },
];

const actionButton = 'flex h-7 items-center justify-center rounded-xs border-2 border-[#183c68] bg-gradient-to-b from-white to-[#dcdcdc]';

function Clock({ out }: { out?: boolean }) {
  return (
    <button
      aria-label={out ? 'Таймер остановки' : 'Таймер запуска'}
      className="flex h-7 w-[49px] items-center justify-center gap-1 border border-t-[#d0d0d0] border-r-[#606060] border-b-[#606060] border-l-[#d0d0d0] bg-gradient-to-b from-[#f8f8f8] to-[#d0d0d0]"
    >
      <Svg w={26} h={24}>
        <circle cx="13" cy="12" r="10" fill="#f4f4f4" stroke="black" />
        <circle cx="13" cy="12" r="8" stroke="#b0b0b0" strokeDasharray="1 3" />
        <path d="M11 6L13 13L18 7" stroke="#a0a0a0" strokeWidth="2" />
        {out ? (
          <path d="M14.500 15.500H19.500V12.500L25 18L19.500 23V20.500H14.500Z" fill="#e020c0" stroke="black" />
        ) : (
          <path d="M1.500 4.500H6.500V1.500L12 7L6.500 12V9.500H1.500Z" fill="#40b0a0" stroke="#104038" />
        )}
      </Svg>
      <DownArrow />
    </button>
  );
}

function ControlPanel() {
  return (
    <div className="flex items-start gap-[5px] border-b border-[#808080] pt-[3px] pb-px pl-[111px]">
      <ChannelGroup />
      <Group title="Частота" tone="text-[#000070]" className="w-[105px]">
        <div className="-mt-0.5 flex justify-center">
          <Knob
            id="rate"
            value="50K"
            step={15}
            labels={[
              { t: '1K', x: -27, y: 23 },
              { t: '100K', x: -30, y: -18 },
              { t: '250K', x: 7, y: -28 },
              { t: '333K', x: 28, y: -18 },
              { t: '500K', x: 35, y: -6 },
              { t: '1M', x: 27, y: 22, off: true },
            ]}
          />
        </div>
      </Group>
      <Group title="Синхронизация" tone="text-[#707070]" className="w-[125px]">
        <div className="flex justify-between px-1.5 pt-1.5">
          {syncTools.map((t) => (
            <button key={t.label} aria-label={t.label} disabled className={clsx('flex size-[22px] items-center justify-center', t.pressed && hatch)}>
              <Svg w={20} h={20}>{t.icon}</Svg>
            </button>
          ))}
        </div>
        <div className="flex items-center justify-between pt-1.5 pr-1.5 pl-2">
          <Combo label="Канал" value="1" disabled arrow="right-1" className="h-[22px] w-[47px] border border-[#a0a0a0]" />
          <div className="flex gap-1.5">
            <button aria-label="Уровень" disabled className="flex size-[22px] items-center justify-center">
              <Svg w={20} h={20}>
                <path d="M2 6V14L6 10Z" fill={gray} />
                <path d="M6 10H18" stroke={gray} strokeDasharray="1 1" />
                <path d="M5 6.500H18M5 14.500H18" stroke={gray} strokeWidth="1.500" />
                <path d="M12 2H18L15 5.500ZM12 19H18L15 15.500Z" fill={gray} />
              </Svg>
            </button>
            <button aria-label="Центр" disabled className={clsx('flex size-[22px] items-center justify-center', hatch)}>
              <Svg w={20} h={20}>
                <path d="M1 10H19" stroke={gray} strokeWidth="2" />
                <path d="M4 6L9 10L4 14ZM16 6L11 10L16 14Z" fill={gray} />
              </Svg>
            </button>
          </div>
        </div>
      </Group>
      <Group title="Управление" tone="text-[#9cb0cc]" className="w-[175px]">
        <div className="grid grid-cols-[34px_46px_46px_31px] gap-x-[3px] gap-y-0.5 pt-1 pl-[3px]">
          <button aria-label="Пауза" disabled className="flex h-7 items-center justify-center rounded-xs border border-[#c0c0c0]">
            <Svg w={12} h={16}><path d="M1.500 1.500H4.500V14.500H1.500ZM7.500 1.500H10.500V14.500H7.500Z" fill="#b0b0b0" stroke="#909090" /></Svg>
          </button>
          <button aria-label="Осциллограф" className={actionButton}>
            <Svg w={30} h={20}><path d="M1 10C5-1 10-1 15 10S25 21 29 10" stroke="#d02020" /></Svg>
          </button>
          <button aria-label="Непрерывно" className="flex h-7 items-center justify-center rounded-xs border-2 border-[#d03030] bg-[#f4f0f4]">
            <Svg w={34} h={20}>
              <path d="M1 3H3L4 8L7 4H9L10 8L13 4H15L16 8L19 4H21L22 8L25 4H27L28 7" stroke="#d02020" />
              <path d="M1 15H3L5 18L7 13L9 15L11 18L13 13L15 15L17 18L19 13L21 15L23 18L25 13L28 15" stroke="#1020d0" />
              <path d="M33 2V9L29 5.500ZM33 12V19L29 15.500Z" fill="#102080" />
            </Svg>
          </button>
          <button aria-label="Авто усиление" className={actionButton}>
            <Svg w={20} h={24}>
              <text x="10" y="8" fontSize="6" fontWeight="bold" textAnchor="middle" fill="black">AUTO</text>
              <path d="M3 11Q10 7 17 11" stroke="#1030e0" strokeWidth="1.500" />
              <path d="M1 13V9L5 12ZM19 13V9L15 12Z" fill="#1030e0" />
              <circle cx="10" cy="16" r="6" stroke="#303030" strokeWidth="2" strokeDasharray="1 2" />
              <circle cx="10" cy="16" r="4.500" fill="white" stroke="black" />
              <path d="M8 14L10 18L12 14" stroke="#1030e0" />
            </Svg>
          </button>
          <button className={clsx(actionButton, 'col-span-2 gap-5 text-[12px] font-bold')}>
            <Svg w={11} h={18}><path d="M1 1V17L10 9Z" fill="#20e820" stroke="#10a010" /></Svg>
            Пуск
          </button>
          <output className="flex h-7 items-center justify-center rounded-[3px] border border-[#3870b0] bg-[#f0f0f0] font-['DejaVu_Sans',sans-serif] text-[11px] font-bold text-[#108010]">
            27.58
          </output>
          <button aria-label="Авто запуск" className={actionButton}>
            <Svg w={20} h={24}>
              <text x="10" y="8" fontSize="6" fontWeight="bold" textAnchor="middle" fill="black">AUTO</text>
              <path d="M1 15.500H4" stroke="#1030e0" strokeWidth="2" />
              <path d="M3 12L7 15.500L3 19Z" fill="#1030e0" />
              <path d="M3 22Q8 23 8 16T13 11" stroke="#d02020" />
              <path d="M14.500 11V20L19 15.500Z" fill="#20e820" stroke="#084008" />
            </Svg>
          </button>
        </div>
      </Group>
      <Group title="Таймеры" tone="text-[#000070]" className="w-[68px]">
        <div className="flex flex-col items-center gap-0.5 pt-1">
          <Clock />
          <Clock out />
        </div>
      </Group>
    </div>
  );
}

function StatusBar() {
  return (
    <footer className="flex h-[19px] gap-1 pt-[3px] pb-px font-['DejaVu_Sans_Condensed','DejaVu_Sans',sans-serif] text-[11px] leading-[14px]">
      <div className="w-[190px] border-t border-r border-[#b0b0b0] pl-1 whitespace-nowrap">USB Осциллограф не подключен</div>
      <div className="grow border-t border-r border-l border-[#b0b0b0]" />
      <div className="w-12 border-t border-l border-[#b0b0b0] pl-0.5">1.9</div>
    </footer>
  );
}

export default function App() {
  return (
    <div className="bg-white pt-3 pr-3 pl-1 font-['Liberation_Sans',Arial,sans-serif] text-[11px] text-black">
      <main className="relative overflow-hidden bg-[#f0f0f0]">
        <TitleBar />
        <a href="http://diamag-osc.com" className="absolute top-[11px] left-[416px] text-[20px] leading-6 text-[#000080]">
          http://diamag-osc.com
        </a>
        <MenuBar />
        <Tabs />
        <div className="border-x border-[#808080]">
          <Toolbar />
          <Oscillogram />
          <ScrollRow />
          <div className="mx-auto flex h-[7px] w-[408px] items-center justify-between border border-[#90a8c0] bg-[#f0f8ff] px-1">
            <DownArrow color="#3090e0" />
            <span className="mx-1 grow border-t border-dotted border-[#3090e0]" />
            <DownArrow color="#3090e0" />
          </div>
          <ControlPanel />
        </div>
        <StatusBar />
        <div className="flex h-1 gap-[188px] border-t border-[#304050] bg-gradient-to-r from-[#88a8cc] to-[#a8c4e0] pl-[307px]">
          <span className="w-[60px] bg-[#e8f0f8]" />
          <span className="w-[60px] bg-[#e8f0f8]" />
        </div>
      </main>
    </div>
  );
}
